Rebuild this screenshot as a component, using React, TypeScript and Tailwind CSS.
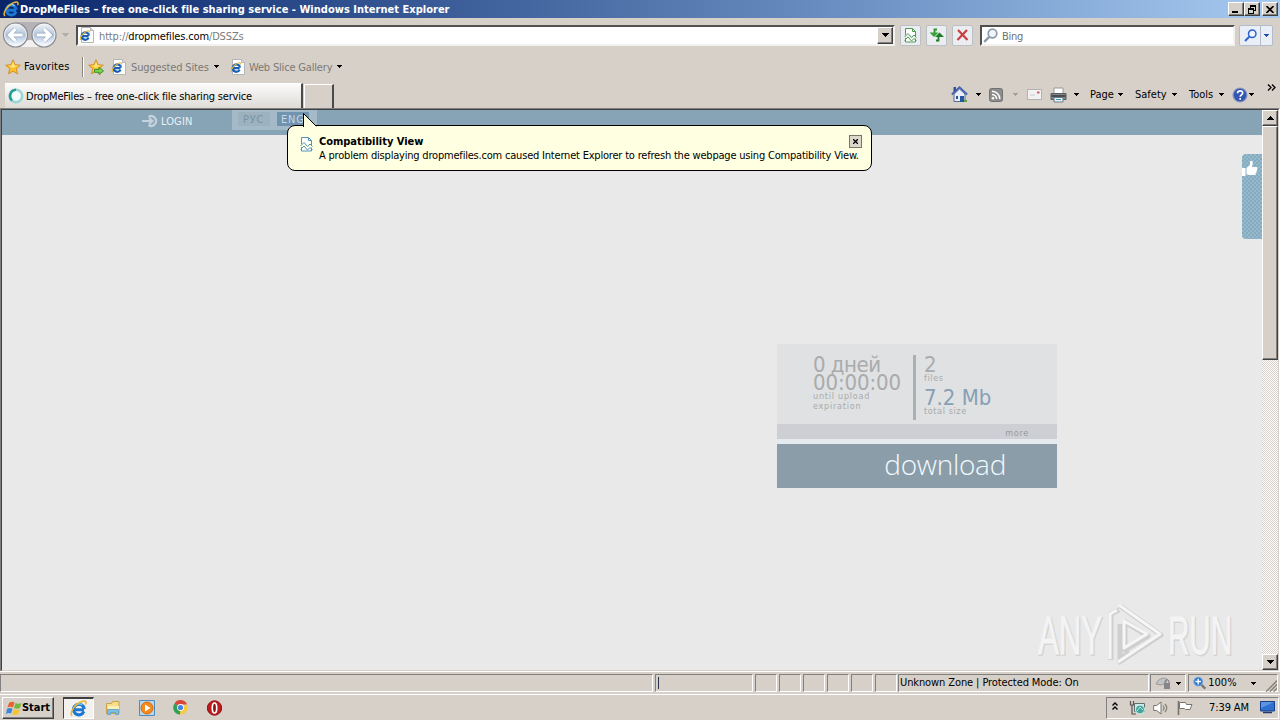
import React from "react";

type P = { className?: string };

const Caret = ({ className = "" }: P) => (
  <svg width="5" height="3" viewBox="0 0 5 3" shapeRendering="crispEdges" className={`shrink-0 ${className}`}>
    <path d="M0 0h5v1H0zM1 1h3v1H1zM2 2h1v1H2z" fill="currentColor" />
  </svg>
);

const BigCaret = ({ className = "" }: P) => (
  <svg width="7" height="4" viewBox="0 0 7 4" shapeRendering="crispEdges" className={`shrink-0 ${className}`}>
    <path d="M0 0h7v1H0zM1 1h5v1H1zM2 2h3v1H2zM3 3h1v1H3z" fill="currentColor" />
  </svg>
);

const IeMark = ({ size = 14, className = "" }: P & { size?: number }) => (
  <svg width={size} height={size} viewBox="0 0 16 16" className={`shrink-0 ${className}`}>
    <path d="M13.2 9.2H4.6M13 10.8A5 5 0 1 1 13.300 8.600" fill="none" stroke="#1c78d4" strokeWidth="3" />
    <path d="M4.200 6.500A4.600 4.600 0 0 1 11.500 4.800" fill="none" stroke="#7fd0fa" strokeWidth="1.300" />
    <path d="M2 15C-1 12 5 3 12 1.200c3-.8 3.600.8 2.600 3" fill="none" stroke="#e9b832" strokeWidth="1.500" />
  </svg>
);

const IePage = ({ className = "" }: P) => (
  <svg width="16" height="16" viewBox="0 0 16 16" className={`shrink-0 ${className}`}>
    <path d="M2.500.500h9l3 3v12h-12z" fill="#fdfdfd" stroke="#b5b5b5" />
    <path d="M11.500.500v3h3" fill="#ddd" stroke="#b5b5b5" />
    <path d="M9.600 9.200H3.400M9.600 10.800A3.700 3.700 0 1 1 10 8.600" fill="none" stroke="#1760b5" strokeWidth="2.200" />
    <path d="M1.600 13C0 11 4 5.500 8.500 4c2-.6 2.600.3 2 1.600" fill="none" stroke="#e5b437" strokeWidth="1.100" />
  </svg>
);

const Star = ({ add = false, className = "" }: P & { add?: boolean }) => (
  <svg width="16" height="16" viewBox="0 0 16 16" className={`shrink-0 ${className}`}>
    <path d="M8 .8l2.100 4.900 5.200.5-4 3.500 1.200 5.200L8 12.200l-4.500 2.700 1.200-5.200-4-3.500 5.200-.5z" fill="#fbc02b" stroke="#cf8a24" strokeWidth=".9" />
    <path d="M8 2.500l1.400 4 3.500.3-4.900 2-4.500-2 3.300-.4z" fill="#ffe680" />
    {add && <path d="M6.500 10.500h4.500V8.300l4.500 3.600-4.500 3.600v-2.200H6.500z" fill="#7bd455" stroke="#2c8c24" strokeWidth=".9" />}
  </svg>
);

const TornPage = ({ color, className = "" }: P & { color: string }) => (
  <svg width="13" height="15" viewBox="0 0 13 15" className={`shrink-0 ${className}`}>
    <path d="M1.500 7V.500h7l3 3V8M8.500.500v3h3M1.500 10v4h10v-3.500" fill="#fff" stroke={color} />
    <path d="M.5 9l3.500-3.500 3.500 4 2.500-2.500 2.500 2.500M.5 12.500L4 9l3.500 4 2.500-2.500 2.500 2.500" fill="none" stroke={color} />
  </svg>
);

const NavButtons = () => (
  <svg width="58" height="30" viewBox="0 0 58 30" className="shrink-0">
    <defs>
      <linearGradient id="nb" x1="0" y1="0" x2="0" y2="1">
        <stop offset="0" stopColor="#eef1f5" />
        <stop offset=".5" stopColor="#afc4db" />
        <stop offset="1" stopColor="#f7fbff" />
      </linearGradient>
    </defs>
    <path d="M14 2h30c4 0 4 3 4 3L44 27H16L10 5z" fill="#b5b3b6" />
    <path d="M20 24q9-8 18 0v3H20z" fill="#f2f1ef" />
    <circle cx="14.500" cy="15" r="12" fill="#f4f4f6" stroke="#85898f" strokeWidth="1.200" />
    <circle cx="14.500" cy="15" r="10.500" fill="url(#nb)" />
    <circle cx="43" cy="15" r="12" fill="#f4f4f6" stroke="#85898f" strokeWidth="1.200" />
    <circle cx="43" cy="15" r="10.500" fill="url(#nb)" />
    <path d="M21.500 15H9M14.500 9l-6 6 6 6" fill="none" stroke="#8fa5bc" strokeWidth="4.400" />
    <path d="M21.500 15H9M14.500 9l-6 6 6 6" fill="none" stroke="#fff" strokeWidth="3.200" />
    <path d="M36 15h13M43 9l6 6-6 6" fill="none" stroke="#8fa5bc" strokeWidth="4.400" />
    <path d="M36 15h13M43 9l6 6-6 6" fill="none" stroke="#fff" strokeWidth="3.200" />
  </svg>
);

const Lens = ({ color, size = 15, className = "" }: P & { color: string; size?: number }) => (
  <svg width={size} height={size} viewBox="0 0 15 15" className={`shrink-0 ${className}`}>
    <circle cx="9.500" cy="5.500" r="4.300" fill="#eef5fc" stroke={color} strokeWidth="1.700" />
    <path d="M6.200 8.800L1.200 13.800" stroke={color} strokeWidth="2.400" />
  </svg>
);

const WinButton = ({ children, className = "" }: P & { children: React.ReactNode }) => (
  <div className={`flex shrink-0 items-center justify-center border border-t-white border-r-[#404040] border-b-[#404040] border-l-white bg-[#d6d0c8] shadow-[inset_-1px_-1px_#808080] ${className}`}>
    {children}
  </div>
);

const ToolButton = ({ children }: { children: React.ReactNode }) => (
  <div className="flex h-[21px] w-[21px] shrink-0 items-center justify-center rounded-xs border border-[#b9c0c8] bg-[#ecedf0]">{children}</div>
);

const Pane = ({ children, className = "" }: P & { children?: React.ReactNode }) => (
  <div className={`flex h-[18px] shrink-0 items-center border border-t-[#808080] border-r-white border-b-white border-l-[#808080] ${className}`}>{children}</div>
);

const TitleBar = () => (
  <div className="flex h-[18px] items-center bg-linear-to-r from-[#0a246a] to-[#a6caf0] pr-[2px] pl-[3px]">
    <IeMark size={16} />
    <span className="ml-px pt-px font-bold tracking-[0.02px] whitespace-nowrap text-white">DropMeFiles – free one-click file sharing service - Windows Internet Explorer</span>
    <div className="ml-auto flex">
      <WinButton className="h-[14px] w-4">
        <svg width="8" height="8" shapeRendering="crispEdges"><path d="M0 6h6v2H0z" /></svg>
      </WinButton>
      <WinButton className="h-[14px] w-4">
        <svg width="9" height="9" shapeRendering="crispEdges"><path d="M2 0h6v6H6V5h1V2H3v1H2zM0 3h6v6H0zM1 5v3h4V5z" fillRule="evenodd" /></svg>
      </WinButton>
      <WinButton className="ml-[2px] h-[14px] w-4">
        <svg width="8" height="7"><path d="M.5 0l7 7M7.500 0l-7 7" stroke="#000" strokeWidth="1.600" /></svg>
      </WinButton>
    </div>
  </div>
);

const AddressRow = () => (
  <div className="flex h-[34px] items-center pl-[1px]">
    <NavButtons />
    <BigCaret className="ml-[3px] text-[#b3aea8]" />
    <div className="ml-[7px] flex h-[21px] w-[819px] shrink-0 items-center border-2 border-t-[#505050] border-r-[#f4f2ee] border-b-[#f4f2ee] border-l-[#505050] bg-white">
      <IePage className="ml-px" />
      <span className="ml-[4px] pt-[3px] tracking-[-0.14px] whitespace-nowrap text-[#7b7b7b]">http://<span className="text-black">dropmefiles.com</span>/DSSZs</span>
      <WinButton className="ml-auto h-[17px] w-4"><BigCaret /></WinButton>
    </div>
    <div className="ml-[5px] flex gap-[5px]">
      <ToolButton><TornPage color="#4e9a55" /></ToolButton>
      <ToolButton>
        <svg width="15" height="14" viewBox="0 0 15 14"><path d="M8 1.500H5.500V5" stroke="#2b9630" strokeWidth="1.800" fill="none" /><path d="M.5 4.500h9L5 9z" fill="#35a33a" /><path d="M7 12.500h2.500V9" stroke="#1f7d28" strokeWidth="1.800" fill="none" /><path d="M6 9l4.500-4.500L15 9z" fill="#1f7d28" /></svg>
      </ToolButton>
      <ToolButton>
        <svg width="13" height="12" viewBox="0 0 13 12"><path d="M2 1l9.500 10M11 1L1.500 11" stroke="#c9403f" strokeWidth="2.200" /></svg>
      </ToolButton>
    </div>
    <div className="ml-[7px] flex h-[21px] w-[255px] shrink-0 items-center border-2 border-t-[#505050] border-r-[#f4f2ee] border-b-[#f4f2ee] border-l-[#505050] bg-white">
      <Lens color="#8f9aa8" size={15} className="ml-px" />
      <span className="ml-[4px] pt-[3px] tracking-[-0.3px] text-[#6f6f6f]">Bing</span>
    </div>
    <div className="ml-[4px] flex h-[21px] w-[34px] shrink-0 items-center rounded-xs border border-[#b3bccb] bg-[#e9eef7]">
      <div className="flex h-full w-[21px] items-center justify-center border-r border-[#b3bccb]"><Lens color="#2d62cf" size={13} /></div>
      <Caret className="ml-[3px] text-[#1f4ca8]" />
    </div>
  </div>
);

const FavoritesRow = () => (
  <div className="flex h-[29px] items-center pl-[5px] text-[#7c7976]">
    <Star />
    <span className="ml-[3px] w-[58px] tracking-[0.1px] text-black">Favorites</span>
    <div className="h-[20px] w-[2px] border-r border-l border-r-white border-l-[#8a8680]" />
    <Star add className="ml-[4px]" />
    <IePage className="ml-[7px]" />
    <span className="ml-[4px] w-[83px] pt-[2px] tracking-[-0.15px] whitespace-nowrap">Suggested Sites</span>
    <Caret className="text-black" />
    <IePage className="ml-[11px]" />
    <span className="ml-[3px] w-[87px] pt-[2px] tracking-[-0.18px] whitespace-nowrap">Web Slice Gallery</span>
    <Caret className="ml-px text-black" />
  </div>
);

const CommandBar = () => (
  <div className="ml-auto flex h-[26px] items-center pt-px">
    <svg width="17" height="17" viewBox="0 0 17 17">
      <path d="M3 8v7.500h11V8L8.500 3z" fill="#e9eef8" stroke="#5b6c96" />
      <path d="M.8 8.500L8.500 1.300l7.700 7.200" fill="none" stroke="#4763b2" strokeWidth="1.800" />
      <path d="M2.500 1h2.500v3l-2.500 2z" fill="#3a4d9b" />
      <path d="M9 10h4v6H9z" fill="#24579e" /><path d="M5 10h2v3H5z" fill="#24579e" /><path d="M13 14h3v2h-3z" fill="#5da04a" />
    </svg>
    <Caret className="ml-[8px]" />
    <svg width="14" height="14" viewBox="0 0 14 14" className="ml-[8px]">
      <rect x=".5" y=".5" width="13" height="13" rx="2" fill="#8d8d8d" stroke="#717171" />
      <circle cx="4" cy="10.200" r="1.300" fill="#fff" /><path d="M3 6.500a4.500 4.500 0 0 1 4.600 4.600M3 3.300a7.800 7.800 0 0 1 7.800 7.800" fill="none" stroke="#fff" strokeWidth="1.500" />
    </svg>
    <Caret className="ml-[10px] text-[#a39e98]" />
    <svg width="15" height="11" viewBox="0 0 15 11" className="ml-[9px]">
      <rect x=".5" y=".5" width="14" height="10" fill="#f3f2f2" stroke="#b4b1b3" /><path d="M10 2.500h2.500v2H10z" fill="#c95a62" /><path d="M3 6h5" stroke="#c9c9d2" />
    </svg>
    <svg width="17" height="16" viewBox="0 0 17 16" className="ml-[8px]">
      <path d="M4 1h9v6H4z" fill="#fff" stroke="#999" /><path d="M1 6.500h15v6H1z" fill="#84888d" stroke="#565b61" /><path d="M1.500 9h14" stroke="#35383d" strokeWidth="1.500" /><path d="M4 10.500h9V15H4z" fill="#e5f0f5" stroke="#6c7c8a" /><path d="M6 12.500h5" stroke="#3f9cc4" />
    </svg>
    <Caret className="ml-[7px]" />
    <span className="ml-[11px] w-[27px]">Page</span><Caret className="ml-px" />
    <span className="ml-[12px] w-[34px] whitespace-nowrap">Safety</span><Caret className="ml-[3px]" />
    <span className="ml-[12px] w-[28px]">Tools</span><Caret className="ml-[2px]" />
    <svg width="16" height="16" viewBox="0 0 16 16" className="ml-[8px]">
      <circle cx="8" cy="8" r="7" fill="#3156b4" stroke="#8e9ac2" strokeWidth="1.200" />
      <path d="M5.500 6.200c0-3.200 5.200-3 5.200-.2 0 1.900-2.500 1.800-2.500 3.700M8.200 11v1.800" fill="none" stroke="#fff" strokeWidth="1.700" />
    </svg>
    <Caret className="ml-px" />
    <svg width="9" height="7" viewBox="0 0 9 7" className="mt-[-14px] mr-[4px] ml-[13px]"><path d="M1 .5l3 3-3 3M5 .5l3 3-3 3" fill="none" stroke="#000" strokeWidth="1.300" /></svg>
  </div>
);

const TabRow = () => (
  <div className="flex h-[27px] items-start pl-[5px]">
    <div className="mt-[2px] flex h-[25px] w-[298px] items-center border-t border-r-2 border-t-white border-r-[#4a4a4a] bg-linear-to-b from-[#fbfbfa] to-[#dedbd6] pl-[3px]">
      <svg width="16" height="16" viewBox="0 0 16 16"><circle cx="8" cy="8" r="6.200" fill="#f2fafa" stroke="#9cd5d5" strokeWidth="2.600" /><path d="M8 1.800a6.200 6.200 0 0 0-4 10.700" fill="none" stroke="#2a9d93" strokeWidth="2.600" /></svg>
      <span className="ml-[2px] pt-px tracking-[-0.18px] whitespace-nowrap">DropMeFiles – free one-click file sharing service</span>
    </div>
    <div className="mt-[3px] ml-[1px] h-[24px] w-[30px] border-t border-r-2 border-l border-t-white border-r-[#4a4a4a] border-l-white" />
    <CommandBar />
  </div>
);

const Hatch = "bg-[repeating-conic-gradient(#ffffff_0_25%,#d6d0c8_0_50%)] bg-size-[2px_2px]";

const ScrollBar = () => (
  <div className={`flex w-4 shrink-0 flex-col ${Hatch}`}>
    <WinButton className="h-4 w-4"><BigCaret className="rotate-180" /></WinButton>
    <WinButton className="h-[234px] w-4">{null}</WinButton>
    <WinButton className="mt-auto h-4 w-4"><BigCaret /></WinButton>
  </div>
);

const Balloon = () => (
  <div className="absolute top-[15px] left-[285px] flex h-[46px] w-[585px] rounded-[8px] border border-black bg-[#ffffe1]">
    <svg width="20" height="15" viewBox="0 0 20 15" className="absolute top-[-14px] left-[14px]">
      <path d="M1.500 15V1.500L14.500 14.500" fill="#ffffe1" stroke="#000" /><path d="M2 14h12.500v1H2z" fill="#ffffe1" />
    </svg>
    <TornPage color="#5294b5" className="mt-[11px] ml-[12px]" />
    <div className="mt-[9px] ml-[6px] leading-[14px] whitespace-nowrap">
      <div className="font-bold tracking-[-0.03px]">Compatibility View</div>
      <div className="tracking-[-0.2px]">A problem displaying dropmefiles.com caused Internet Explorer to refresh the webpage using Compatibility View.</div>
    </div>
    <div className="absolute top-[9px] right-[9px] flex h-[13px] w-[13px] items-center justify-center border border-[#77756c] bg-[#dcd8cb]">
      <svg width="5" height="5"><path d="M0 0l5 5M5 0L0 5" stroke="#000" strokeWidth="1.300" /></svg>
    </div>
  </div>
);

const Watermark = () => (
  <svg width="214" height="70" viewBox="0 -2 214 70" className="absolute right-[13px] bottom-0">
    <g fontFamily="'Liberation Sans Narrow', 'Liberation Sans', sans-serif" fontSize="54">
      <g fill="#d4d4d4" stroke="#d4d4d4" strokeWidth="2">
        <text x="4" y="53" textLength="64" lengthAdjust="spacingAndGlyphs">ANY</text>
        <text x="134" y="53" textLength="64" lengthAdjust="spacingAndGlyphs">RUN</text>
      </g>
      <g fill="#f4f4f4" stroke="#f4f4f4" strokeWidth=".8">
        <text x="3" y="52" textLength="64" lengthAdjust="spacingAndGlyphs">ANY</text>
        <text x="133" y="52" textLength="64" lengthAdjust="spacingAndGlyphs">RUN</text>
      </g>
    </g>
    <g fill="none" strokeLinejoin="round">
      <path d="M76 58V12l8-4M85 22v34l10-5M85 4l41 29-43 28M90 20l23 14-23 14z" stroke="#cfcfcf" strokeWidth="5" />
      <path d="M75 57V12l7-4M84 3l41 29-42 28M89 19l23 13-23 14z" stroke="#f6f6f6" strokeWidth="3" />
    </g>
  </svg>
);

const DownloadCard = () => (
  <div className="mt-[209px] ml-[775px] w-[280px] bg-[#e5eaee] text-[#a9abac]">
    <div className="flex h-20 bg-[#dfe1e3] pt-[11px] pl-9">
      <div className="h-[65px] w-[103px] border-r-3 border-[#a9b1b5] pt-px text-[22px] leading-[18px]">
        <div className="tracking-[-0.5px] whitespace-nowrap">0 дней</div>
        <div className="tracking-[-0.1px] whitespace-nowrap">00:00:00</div>
        <div className="mt-[-1px] text-[9px] leading-[10px] tracking-[0.75px]">until upload<br />expiration</div>
      </div>
      <div className="ml-[8px] pt-px text-[22px] leading-[18px]">
        <div>2</div>
        <div className="mt-[-1px] text-[9px] leading-[10px] tracking-[0.6px]">files</div>
        <div className="mt-[6px] text-[#86a0b5]">7.2 Mb</div>
        <div className="mt-[-1px] text-[9px] leading-[10px] tracking-[0.6px]">total size</div>
      </div>
    </div>
    <div className="h-[15px] bg-[#cecfd4] pt-[3px] pr-7 text-right text-[9px] leading-[12px] tracking-[0.7px] text-[#96999d]">more</div>
    <div className="mt-[5px] h-11 bg-[#8a9da8] pr-[51px] text-right font-['Open_Sans',sans-serif] text-[28px] leading-[40px] font-light tracking-[-0.3px] text-[#f2f9ff] [font-stretch:normal]">download</div>
  </div>
);

const WebPage = () => (
  <div className="relative w-[1260px] shrink-0 bg-[#e9e9e9]">
    <div className="flex h-[25px] bg-[#87a3b6] pl-[140px]">
      <svg width="17" height="14" viewBox="0 0 17 14" className="mt-[4px]"><path d="M0 7h9M7 4l3.500 3L7 10M6.500 3a4.800 4.800 0 1 1 0 8" fill="none" stroke="#c6d2db" strokeWidth="2.200" /></svg>
      <span className="mt-[5px] ml-[2px] w-[71px] tracking-[0.1px] text-[#e8f0f5]">LOGIN</span>
      <div className="flex h-5 w-[85px] gap-[7px] bg-[#a5bac8] pt-[2px] pl-[6px] text-[11px] tracking-[0.8px]">
        <div className="h-[14px] w-8 bg-[#9cb2bf] pl-[5px] leading-[15px] text-[#7b929f]">РУС</div>
        <div className="h-[14px] w-8 bg-[#7093b0] pl-[4px] leading-[15px] text-[#c6d8e5]">ENG</div>
      </div>
    </div>
    <DownloadCard />
    <div className="absolute top-[44px] right-0 h-[85px] w-5 rounded-l-[4px] bg-[#8db3c6] bg-[repeating-conic-gradient(#84abc0_0_25%,#97bacb_0_50%)] bg-size-[4px_4px]">
      <svg width="16" height="17" viewBox="0 0 16 17" className="mt-[6px]"><path d="M0 8h3.500v8H0zM4.500 8L8 5V1.500c1.500-1.500 3-.3 2.800 1.500L10 7h4.500c1.500.3 1.300 2 .3 2.200.8.8.3 2-.5 2.100.6.900 0 1.800-.7 1.900.5 1-.1 1.900-1.100 1.900H7l-2.500-1z" fill="#fff" /></svg>
    </div>
    <Watermark />
    <Balloon />
  </div>
);

const StatusBar = () => (
  <div className="flex h-[23px] items-start border-t border-white pt-[2px]">
    <Pane className="w-[653px]" />
    <Pane className="ml-[2px] w-[98px] pl-[2px]"><div className="h-3 w-px bg-[#26334d]" /></Pane>
    <div className="ml-[2px] flex gap-[2px]">
      <Pane className="w-[22px]" /><Pane className="w-[22px]" /><Pane className="w-[22px]" /><Pane className="w-[22px]" /><Pane className="w-[22px]" /><Pane className="w-[22px]" />
    </div>
    <Pane className="ml-[1px] w-[251px] pl-px tracking-[-0.1px]">Unknown Zone | Protected Mode: On</Pane>
    <Pane className="ml-[1px] w-[36px] pl-[4px]">
      <svg width="17" height="14" viewBox="0 0 17 14"><path d="M1 8C3 3 8 1 12 3l-1 4-5 2z" fill="#c4c3c4" stroke="#98989a" /><path d="M9 7h6v6H9z" fill="#85868a" /><path d="M10 7V5q2-3 4 0v2" fill="none" stroke="#777" /></svg>
      <Caret className="ml-[4px]" />
    </Pane>
    <Pane className="ml-[2px] w-[90px] pl-[4px]">
      <svg width="14" height="14" viewBox="0 0 14 14"><circle cx="5.500" cy="5.500" r="4.600" fill="#2675d6" stroke="#6fa2dc" /><path d="M5.500 2.500v6M2.500 5.500h6" stroke="#fff" strokeWidth="1.500" /><path d="M9 9l4 4" stroke="#777" strokeWidth="2.400" /></svg>
      <span className="ml-[2px] w-[30px]">100%</span>
      <Caret className="ml-[14px]" />
      <svg width="12" height="12" viewBox="0 0 12 12" className="mt-[5px] ml-[10px]"><path d="M0 12L12 0M4 12l8-8M8 12l4-4" stroke="#85817a" strokeWidth="1.500" /></svg>
    </Pane>
  </div>
);

const TaskBar = () => (
  <div className="flex h-[26px] items-center border-t border-white">
    <WinButton className="ml-[2px] h-[22px] w-[52px]">
      <svg width="17" height="16" viewBox="0 0 17 16" className="shrink-0"><path d="M3 3q3-2 5.500-.5L7 7.500Q4.500 6 1.500 7.500z" fill="#e8632c" /><path d="M9.500 3q3 1.300 6 0L14 8q-3 1.300-6 0z" fill="#76b83f" /><path d="M1 8.800q3-1.500 5.500 0L5 13.500Q3 12.500 0 14z" fill="#3c86d8" /><path d="M7.700 9.300q3 1.300 6 0l-1.500 5q-3 1.300-6 0z" fill="#f5c42f" /></svg>
      <span className="ml-[-1px] font-bold">Start</span>
    </WinButton>
    <div className="ml-[9px] flex h-[22px] w-[31px] items-center justify-center border border-t-2 border-t-[#404040] border-r-white border-b-white border-l-[#404040] bg-[#f3f1ee]"><IeMark size={17} /></div>
    <svg width="16" height="16" viewBox="0 0 16 16" className="ml-[11px]"><path d="M1.500 3.500h5l1-2H14v12H1.500z" fill="#f5de8a" stroke="#c9a24a" /><path d="M3 6h11v5H3z" fill="#fbefb6" /><path d="M2.500 14.500v-5h11v5h-3v-2h-5v2z" fill="#7cbde2" stroke="#5a9cc8" strokeWidth=".8" /></svg>
    <svg width="16" height="16" viewBox="0 0 16 16" className="ml-[18px]"><path d="M.5.5h15v15H.5z" fill="#b9d8ee" stroke="#4a8cc0" /><circle cx="8" cy="8" r="6" fill="#f48a1d" stroke="#d96b10" /><path d="M6 4.500l5.500 3.500L6 11.500z" fill="#fff" /></svg>
    <svg width="15" height="15" viewBox="0 0 15 15" className="ml-[18px]"><path d="M7.500 7.500L1.500 3.500A7 7 0 0 1 14 4.500H7.500z" fill="#dc4437" /><path d="M7.500 7.500L14 4.500A7 7 0 0 1 7 14.500z" fill="#f7cb3e" /><path d="M7.500 7.500L7 14.500A7 7 0 0 1 1.500 3.500z" fill="#30a152" /><circle cx="7.500" cy="7.500" r="3.400" fill="#fff" /><circle cx="7.500" cy="7.500" r="2.600" fill="#4a80e8" /></svg>
    <svg width="15" height="16" viewBox="0 0 15 16" className="ml-[19px]"><circle cx="7.500" cy="8" r="7.200" fill="#c01a1e" stroke="#8d1013" /><ellipse cx="7.500" cy="8" rx="2.200" ry="5" fill="#861012" stroke="#fff" strokeWidth="1.700" /></svg>
    <div className="mr-[1px] ml-auto flex h-[22px] w-[173px] items-center border border-t-[#808080] border-r-white border-b-white border-l-[#808080] pl-[5px]">
      <svg width="6" height="9" viewBox="0 0 6 9" className="mb-[2px]"><path d="M.5 3.500L3 1l2.500 2.500M.5 7.500L3 5l2.500 2.500" fill="none" stroke="#000" strokeWidth="1.400" /></svg>
      <svg width="17" height="16" viewBox="0 0 17 16" className="ml-[11px]"><path d="M5.500 3.500h10v8h-10z" fill="#c8ebe7" stroke="#61706f" /><path d="M1.500 1v4h3V1M3 5v9h4" fill="none" stroke="#555" strokeWidth="1.200" /><circle cx="11" cy="9.500" r="4.500" fill="#43a69c" stroke="#e5f5f3" /><path d="M8 11l3-4 3 3" stroke="#b6e8df" fill="none" /></svg>
      <svg width="16" height="14" viewBox="0 0 16 14" className="ml-[7px]"><path d="M.7 4.500h3L8 1v12L3.700 9.500h-3z" fill="#fff" stroke="#77746f" /><path d="M10 4.500q2 2.500 0 5M12 3q3.500 4 0 8" fill="none" stroke="#85817b" strokeWidth="1.200" /></svg>
      <svg width="16" height="14" viewBox="0 0 16 14" className="ml-[8px]"><path d="M1.500 0v14" stroke="#77746f" strokeWidth="1.600" /><path d="M2.500 1.500h6l1 2h5.500l-2 5H8.500l-1-1h-5z" fill="#fff" stroke="#77746f" /></svg>
      <span className="ml-[16px] w-[42px] tracking-[-0.1px] whitespace-nowrap">7:39 AM</span>
      <svg width="15" height="13" viewBox="0 0 15 13" className="ml-[9px]"><path d="M.5.500h14v9.500H.500z" fill="#2f6fd0" stroke="#173f8a" /><path d="M1 1h13L1 7z" fill="#5d95e4" /><path d="M3 11.500h9" stroke="#23396b" strokeWidth="1.500" /></svg>
    </div>
  </div>
);

export default function App() {
  return (
    <div className="flex h-[720px] w-[1280px] cursor-default flex-col overflow-hidden bg-[#d6d0c8] font-['DejaVu_Sans_Condensed','DejaVu_Sans',sans-serif] text-[11px] leading-[14px] text-black [font-stretch:condensed] select-none">
      <TitleBar />
      <AddressRow />
      <FavoritesRow />
      <TabRow />
      <div className="h-[563px] border-t border-r border-l border-t-[#808080] border-r-white border-l-[#808080]">
        <div className="flex h-[562px] border-t border-r border-b border-l border-t-[#404040] border-r-[#d6d0c8] border-b-[#d6d0c8] border-l-[#404040]">
          <WebPage />
          <ScrollBar />
        </div>
      </div>
      <StatusBar />
      <TaskBar />
    </div>
  );
}
